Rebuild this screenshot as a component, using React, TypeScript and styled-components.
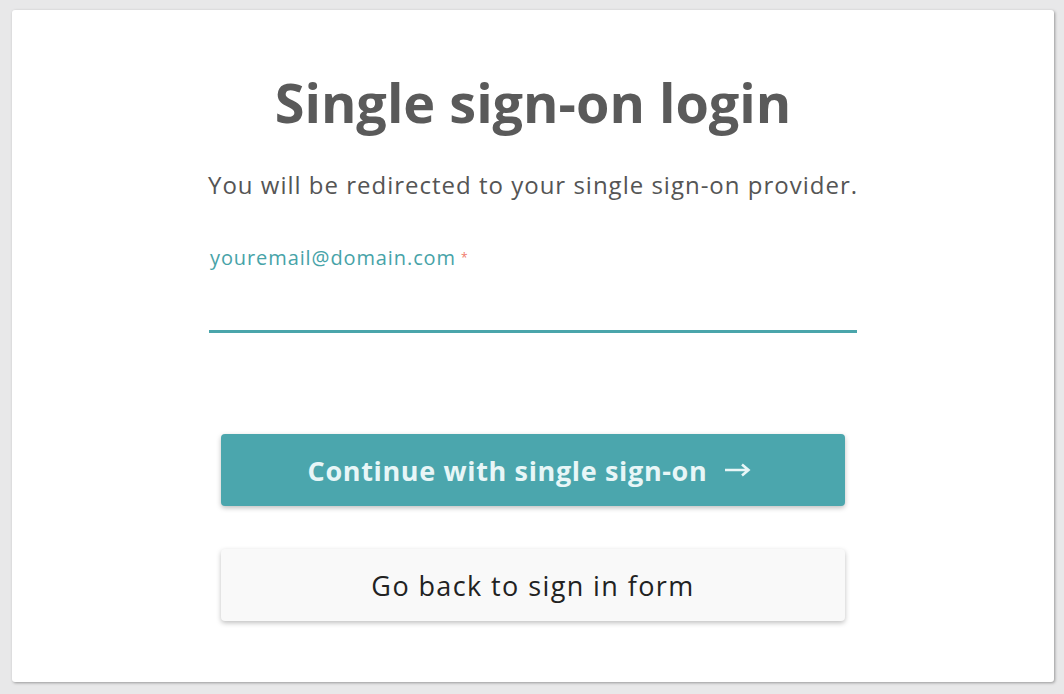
import styled, { createGlobalStyle } from "styled-components";

const GlobalStyle = createGlobalStyle`
  html, body {
    margin: 0;
    padding: 0;
    background: #e8e8e9;
    font-family: "Open Sans", "Noto Sans", sans-serif;
  }
`;

const ArrowRight = () => (
  <svg width="27" height="14" viewBox="0 0 27 14" aria-hidden="true">
    <path d="M1 7h23M18 1.5L24.5 7L18 12.5" fill="none" stroke="currentColor" strokeWidth="2.6" />
  </svg>
);

const App = () => {
  return (
    <>
      <GlobalStyle />
      <Page>
        <Card>
          <Title>Single sign-on login</Title>
          <Subtitle>You will be redirected to your single sign-on provider.</Subtitle>
          <Field>
            <Label>
              youremail@domain.com<Required>*</Required>
            </Label>
            <Input type="email" aria-label="email" />
          </Field>
          <Actions>
            <Button variant="primary">
              Continue with single sign-on
              <ArrowRight />
            </Button>
            <Button variant="secondary">Go back to sign in form</Button>
          </Actions>
        </Card>
      </Page>
    </>
  );
};

export default App;

const Page = styled.div`
  padding: 10px 10px 12px 12px;
  height: 694px;
  box-sizing: border-box;
`;

const Card = styled.div`
  background: #fff;
  border-radius: 3px;
  box-shadow: 1px 1px 3px rgba(0, 0, 0, 0.35);
  height: 100%;
  box-sizing: border-box;
  display: flex;
  flex-direction: column;
  align-items: center;
  padding-top: 60px;
`;

const Title = styled.h1`
  margin: 0;
  font-size: 54px;
  line-height: 64px;
  font-weight: 700;
  color: #5a5a5a;
`;

const Subtitle = styled.p`
  margin: 36px 0 0;
  font-size: 24px;
  line-height: 30px;
  letter-spacing: 1px;
  color: #555;
`;

const Field = styled.div`
  width: 648px;
  margin-top: 46px;
  display: flex;
  flex-direction: column;
`;

const Label = styled.label`
  font-size: 20px;
  line-height: 24px;
  letter-spacing: 0.9px;
  color: #47a3a8;
  padding-left: 1px;
`;

const Required = styled.span`
  color: #f07a6a;
  font-size: 12px;
  vertical-align: top;
  margin-left: 5px;
`;

const Input = styled.input`
  border: none;
  border-bottom: 3px solid #4aa5ab;
  outline: none;
  height: 60px;
  padding: 0;
  font-size: 18px;
  background: transparent;
`;

const Actions = styled.div`
  margin-top: 101px;
  display: flex;
  flex-direction: column;
  gap: 43px;
`;

const Button = styled.button<{ variant: "primary" | "secondary" }>`
  width: 624px;
  height: 72px;
  border: none;
  border-radius: 4px;
  font-family: inherit;
  font-size: 27px;
  cursor: pointer;
  display: flex;
  align-items: center;
  justify-content: center;
  gap: 17px;
  padding: ${(p) => (p.variant === "primary" ? "0 7px 0 0" : "0")};
  font-weight: ${(p) => (p.variant === "primary" ? 700 : 400)};
  letter-spacing: ${(p) => (p.variant === "primary" ? "0.65px" : "1.4px")};
  background: ${(p) => (p.variant === "primary" ? "#4ba6ad" : "#f9f9f9")};
  color: ${(p) => (p.variant === "primary" ? "#e8f6f7" : "#222")};
  box-shadow: 0 2px 5px rgba(0, 0, 0, 0.25);
`;
